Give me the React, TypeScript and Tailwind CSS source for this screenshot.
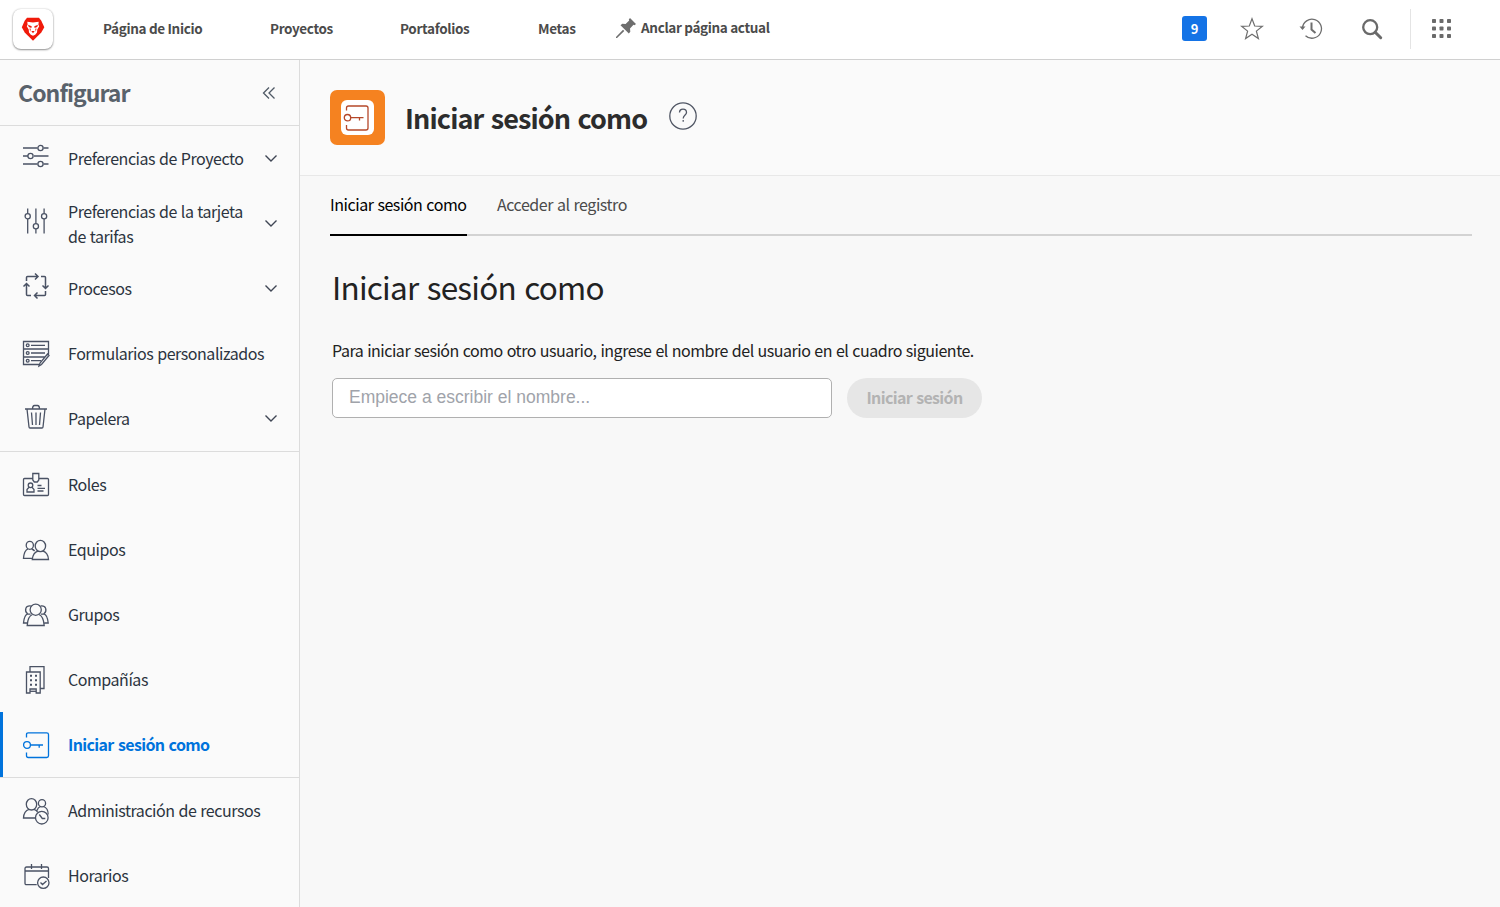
import React from "react";

const FONT = "font-['Noto_Sans_CJK_SC','Noto_Sans',sans-serif]";

function Glyph({ children }: { children: React.ReactNode }) {
  return (
    <svg width="28" height="28" viewBox="0 0 28 28" fill="none" stroke="currentColor" strokeWidth="1.3" className="shrink-0">
      {children}
    </svg>
  );
}

const icons = {
  sliders: (
    <Glyph>
      <path d="M1 6h14.5M21.500 6H26.500M1 14h5M12 14h14.500M1 22h14.500M21.500 22h5" />
      <circle cx="18.500" cy="6" r="2.600" />
      <circle cx="8.500" cy="14" r="2.600" />
      <circle cx="18.500" cy="22" r="2.600" />
    </Glyph>
  ),
  slidersV: (
    <Glyph>
      <path d="M5.700 1.500v5M5.700 12v14.500M13.900 1.500v15M13.900 22v4.500M22.100 1.500v5M22.100 12v14.500" />
      <circle cx="5.700" cy="9.200" r="2.600" />
      <circle cx="13.900" cy="19.200" r="2.600" />
      <circle cx="22.100" cy="9.200" r="2.600" />
    </Glyph>
  ),
  process: (
    <Glyph>
      <path d="M4.500 9V5.500q0-1 1-1H16M13 1.500l3 3-3 3M19 4.500h3.500q1 0 1 1V16M20.500 13.500l3 3 3-3M23.500 19v3.500q0 1-1 1H12.500M15.500 20.500l-3 3 3 3M9 23.500H5.500q-1 0-1-1V12M1.500 14.500l3-3 3 3" strokeWidth="1.5" />
    </Glyph>
  ),
  forms: (
    <Glyph>
      <path d="M18 24.500H1.500V1.500h25V15M1.500 9h25M1.500 17h22M9 5.300h14M9 13h14M9 20.700h10M17 26l1-3 7.500-9 1.500 1.500-7.500 9z" />
      <circle cx="5.700" cy="5.300" r="1.400" />
      <circle cx="5.700" cy="13" r="1.400" />
      <circle cx="5.700" cy="20.700" r="1.400" />
    </Glyph>
  ),
  trash: (
    <Glyph>
      <path d="M3 6h22M5 6l2 18q.1 1 1 1h12q.9 0 1-1l2-18M10.500 6q0-3.500 2-3.500h3q2 0 2 3.500M9.500 9.500l1 12.500M14 9.500v12.500M18.500 9.500l-1 12.500" />
    </Glyph>
  ),
  badge: (
    <Glyph>
      <path d="M11 7.500H2.500q-1 0-1 1v15q0 1 1 1h23q1 0 1-1v-15q0-1-1-1H17M10.800 2.500h6V9l-1.500 2h-3l-1.500-2zM15.500 14.500h4M15.500 17.300h7.500M15.500 20h6" />
      <circle cx="8.500" cy="14.300" r="2.300" />
      <path d="M7 16.300L5 18.500V21h7v-2.500l-2-2.200" />
    </Glyph>
  ),
  team: (
    <Glyph>
      <ellipse cx="18.400" cy="10" rx="5.200" ry="5.700" />
      <ellipse cx="7.800" cy="9.300" rx="3.600" ry="4" />
      <path d="M16 15.200c-3.300.8-5.200 4-5.700 8.300h16.200c-.4-4.300-2.300-7.500-5.500-8.300M6 13c-3 .9-4.100 4.700-4.500 9.300h8.800M9.600 13q1.800.5 3 2" />
    </Glyph>
  ),
  group: (
    <Glyph>
      <circle cx="13.700" cy="8.700" r="5.600" />
      <path d="M10.500 13.500C7 14.700 5.500 19.500 5.200 24.500h17C21.800 19 20 14.700 17 13.500M8.800 5C3.500 4.200 2 9.500 5.500 12.800c-3 1.200-3.600 4.700-4 9.200H5M18.700 5c5.300-.8 6.800 4.500 3.300 7.800 3 1.200 3.800 4.700 4.200 9.200h-3.700M5.500 12.800l3.200.4M22 12.800l-3.200.4" />
    </Glyph>
  ),
  company: (
    <Glyph>
      <path d="M8 5.500V.7h14v21.800h-3.500M4.500 6h13.700v21h-4v-4H8v4H4.500z" />
      <path d="M8 9.700h2M13 9.700h2M8 14.200h2M13 14.200h2M8 18.700h2M13 18.700h2" strokeWidth="2" />
      <path d="M8 25.300h6" />
    </Glyph>
  ),
  login: (
    <Glyph>
      <path d="M4.500 6.500V3.500q0-1.700 1.700-1.700h18.500q1.800 0 1.800 1.800v21.100q0 1.800-1.800 1.800H6.200q-1.700 0-1.700-1.700V21.500M8.500 14H21M17.200 14v2.700" />
      <circle cx="5" cy="14" r="3.400" />
    </Glyph>
  ),
  resources: (
    <Glyph>
      <ellipse cx="9.500" cy="7.300" rx="5.200" ry="5.700" />
      <circle cx="20" cy="6.200" r="3.600" />
      <circle cx="19.800" cy="20.700" r="6.300" />
      <path d="M7 12.300C3.500 13.300 1.700 16.500 1.500 21H13.500M12 12.300q2.500.7 3.700 3M18.500 9.500c-2 .7-3 2.300-3.500 4M21.500 9.500c3 1 4.700 4 4.700 8M17.300 17.500l3 4h3" />
    </Glyph>
  ),
  calendar: (
    <Glyph>
      <path d="M14.700 22.700H4.500Q3 22.700 3 21.200V6.500Q3 5 4.500 5H25q1.500 0 1.500 1.500V16M3 9h23.500M9.500 2v5M19.500 2v5M18.500 20.500l2 2 4-3.500" />
      <circle cx="21.300" cy="20.700" r="5.700" />
    </Glyph>
  ),
};

type Item = { icon: keyof typeof icons; label: string; more?: boolean; active?: boolean; nudge?: string };

const groups: Item[][] = [
  [
    { icon: "sliders", label: "Preferencias de Proyecto", more: true, nudge: "-mt-1.5" },
    { icon: "slidersV", label: "Preferencias de la tarjeta de tarifas", more: true, nudge: "-mt-1.5" },
    { icon: "process", label: "Procesos", more: true, nudge: "-mt-1.5" },
    { icon: "forms", label: "Formularios personalizados" },
    { icon: "trash", label: "Papelera", more: true, nudge: "-mt-1" },
  ],
  [
    { icon: "badge", label: "Roles" },
    { icon: "team", label: "Equipos" },
    { icon: "group", label: "Grupos" },
    { icon: "company", label: "Compañías" },
    { icon: "login", label: "Iniciar sesión como", active: true },
  ],
  [
    { icon: "resources", label: "Administración de recursos" },
    { icon: "calendar", label: "Horarios" },
  ],
];

function SideItem({ item }: { item: Item }) {
  return (
    <a
      className={`flex h-[65px] items-center border-l-[3px] pl-[19px] ${
        item.active
          ? "border-[#0073dc] font-bold tracking-[-0.63px] text-[#0073dc] [word-spacing:1.2px]"
          : "border-transparent tracking-[-0.46px] text-[#2c3440] [word-spacing:0.8px]"
      }`}
    >
      <span className={`flex ${item.nudge ?? ""} ${item.active ? "" : "text-[#4a5264]"}`}>{icons[item.icon]}</span>
      <span className={`ml-[18px] w-[200px] text-base leading-[25px] ${item.more ? "pr-4" : ""}`}>{item.label}</span>
      {item.more && (
        <svg width="14" height="9" viewBox="0 0 14 9" fill="none" stroke="#3f4654" strokeWidth="1.4" className="-ml-1">
          <path d="M1.500 1.500l5.500 5.500 5.500-5.500" />
        </svg>
      )}
    </a>
  );
}

export default function App() {
  return (
    <div className={`flex h-[907px] w-[1500px] flex-col overflow-hidden bg-[#f8f8f8] ${FONT}`}>
      <header className="flex h-[60px] shrink-0 items-center border-b border-[#d0d0d0] bg-white text-[13.5px] font-bold tracking-[-0.34px] text-[#4b4b4b]">
        <div className="mb-0.5 ml-[13px] flex size-10 items-center justify-center rounded-lg bg-white shadow-[0_1px_2px_rgba(0,0,0,0.4),0_0_2px_rgba(0,0,0,0.2)]">
          <svg width="24" height="24" viewBox="0 0 24 24">
            <path d="M6 .8h12l2.300 3L23.300 10.300 20.300 15.500 12 23.700 3.700 15.500 .8 10.300 3.700 3.800z" fill="#f01a0a" />
            <path d="M6.300 4.800L12 5.500l5.700-.7-.3 3 .8 1.500-1.900 3.200-.3 3-1.800 2.300-2.200.9-2.200-.9L8 15.500l-.3-3-1.900-3.200.8-1.500z" fill="#fff" />
            <path d="M7 7.800l3.700 1.400-.3 1.700-2.600-.9zM17 7.800l-3.700 1.400.3 1.700 2.600-.9zM10.300 14h3.400L12 16.200zM8.500 11.500l1.300.3-.6 3zM15.500 11.500l-1.300.3.6 3z" fill="#f01a0a" />
          </svg>
        </div>
        <nav className="mb-[3px] flex items-center leading-5">
          <span className="ml-[50px] w-[167px] whitespace-nowrap">Página de Inicio</span>
          <span className="w-[130px]">Proyectos</span>
          <span className="w-[138px]">Portafolios</span>
          <span className="w-[78px]">Metas</span>
        </nav>
        <svg width="21" height="21" viewBox="0 0 21 21" className="mb-0.5" fill="#6e6e6e">
          <path d="M14 0l6 6-1.500 1.200-1-.4-3.500 3.600.3 3.400-1.500 1.700L4.500 7.200 6.300 5.700l3.300.4 3.600-3.600-.4-1zM7 11.700l1.300 1.300L1 20H0v-1z" />
        </svg>
        <span className="mb-[5px] ml-[4px] w-[541px] whitespace-nowrap leading-5">Anclar página actual</span>
        <span className="mb-0.5 flex h-[25px] w-[25px] items-center justify-center rounded-[3px] bg-[#1473e6] text-[13px] leading-5 text-white">9</span>
        <svg width="24" height="24" viewBox="0 0 24 24" className="mb-0.5 ml-[33px]" fill="none" stroke="#6e6e6e" strokeWidth="1.200">
          <path d="M12 1.800l2.700 7.200 7.700.3-6 4.800 2 7.400L12 17.200l-6.400 4.300 2-7.400-6-4.800 7.700-.3z" />
        </svg>
        <svg width="24" height="24" viewBox="0 0 24 24" className="mb-0.5 ml-[35px]" fill="none" stroke="#6e6e6e" strokeWidth="1.300">
          <path d="M3.500 11A9.500 9.500 0 1 1 6.500 18.700" />
          <path d="M0.500 9.500h6L3.500 13z" fill="#6e6e6e" stroke="none" />
          <path d="M12.500 5.500v7l4 3.500" strokeWidth="2" />
        </svg>
        <svg width="24" height="24" viewBox="0 0 24 24" className="mb-0.5 ml-[37px]" fill="none" stroke="#6a6a6a" strokeWidth="2.300">
          <circle cx="10.200" cy="10.200" r="7" />
          <path d="M15.200 15.200l5.500 5.500" strokeWidth="3" strokeLinecap="round" />
        </svg>
        <span className="mb-0.5 ml-[26px] h-10 w-px bg-[#e4e4e4]" />
        <svg width="20" height="20" viewBox="0 0 20 20" className="mb-0.5 ml-[21px]" fill="#6a6a6a">
          {[0, 7.5, 15].map((y) => [0, 7.5, 15].map((x) => <rect key={`${x}-${y}`} x={x} y={y} width="4" height="4" rx="0.8" />))}
        </svg>
      </header>

      <div className="flex min-h-0 grow">
        <aside className="w-[300px] shrink-0 overflow-hidden border-r border-[#dcdcdc] bg-[#fafafa]">
          <div className="flex h-[66px] items-center justify-between border-b border-[#dcdcdc] pr-[22px] pl-[18px]">
            <h2 className="mb-px text-[23px] leading-8 font-bold tracking-[-0.95px] text-[#59626b]">Configurar</h2>
            <svg width="16" height="16" viewBox="0 0 16 16" fill="none" stroke="#505a66" strokeWidth="1.300">
              <path d="M8 2.500L2.500 8 8 13.500M13.500 2.500L8 8l5.500 5.500" />
            </svg>
          </div>
          {groups.map((items, g) => (
            <div key={g} className={g < 2 ? "border-b border-[#dcdcdc]" : ""}>
              {items.map((item) => (
                <SideItem key={item.label} item={item} />
              ))}
            </div>
          ))}
        </aside>

        <main className="flex min-w-0 grow flex-col">
          <div className="flex h-[116px] items-center border-b border-[#e8e8e8] bg-[#fafafa] pl-[30px]">
            <div className="flex size-[55px] items-center justify-center rounded-[7px] bg-[#f58220]">
              <div className="flex h-[35px] w-[33px] items-center justify-center rounded-[6px] bg-white">
                <svg width="28" height="28" viewBox="0 0 28 28" fill="none" stroke="#b5482a" strokeWidth="1.300" className="mr-px">
                  <path d="M3.500 6.500V4q0-2 2-2H23q2 0 2 2v20q0 2-2 2H5.500q-2 0-2-2v-3M8 13.700h12.500M16.500 13.700v2.800" />
                  <circle cx="4.500" cy="13.700" r="3.200" />
                </svg>
              </div>
            </div>
            <h1 className="ml-5 w-[242px] text-[27px] leading-9 font-bold tracking-[-0.88px] whitespace-nowrap text-[#2c2c2c] [word-spacing:2px]">Iniciar sesión como</h1>
            <svg width="28" height="28" viewBox="0 0 28 28" className="mb-1 ml-[22px]" fill="none" stroke="#505664" strokeWidth="1.300">
              <circle cx="14" cy="14" r="13.200" />
              <path d="M10.500 10.500c0-4.500 7-4.500 7 0 0 2.500-3.300 2.500-3.300 6M14.200 18v1.800" />
            </svg>
          </div>

          <div className="mr-7 ml-[30px] flex h-[60px] border-b-2 border-[#d3d3d3] text-base leading-6 tracking-[-0.45px] [word-spacing:0.8px]">
            <span className="-mb-0.5 h-[60px] w-[137px] border-b-2 border-black pt-4 whitespace-nowrap text-black">Iniciar sesión como</span>
            <span className="ml-[30px] pt-4 whitespace-nowrap text-[#4b4b4b]">Acceder al registro</span>
          </div>

          <section className="pl-8">
            <h2 className="mt-[27px] text-[31.5px] leading-[46px] tracking-[-0.77px] text-[#222] [word-spacing:2px]">Iniciar sesión como</h2>
            <p className="mt-[29px] text-base leading-6 tracking-[-0.48px] text-[#222] [word-spacing:0.8px]">
              Para iniciar sesión como otro usuario, ingrese el nombre del usuario en el cuadro siguiente.
            </p>
            <div className="mt-4 flex gap-[15px]">
              <input
                className="h-10 w-[500px] rounded-[5px] border border-[#b0b0b0] bg-white px-4 pb-0.5 font-['Liberation_Sans',sans-serif] text-[17.5px] placeholder:text-[#a0a3aa]"
                placeholder="Empiece a escribir el nombre..."
              />
              <button className="h-10 w-[135px] rounded-full bg-[#e6e6e6] pb-0.5 text-base font-bold tracking-[-0.66px] text-[#b3b3b3] [word-spacing:1.2px]">Iniciar sesión</button>
            </div>
          </section>
        </main>
      </div>
    </div>
  );
}
